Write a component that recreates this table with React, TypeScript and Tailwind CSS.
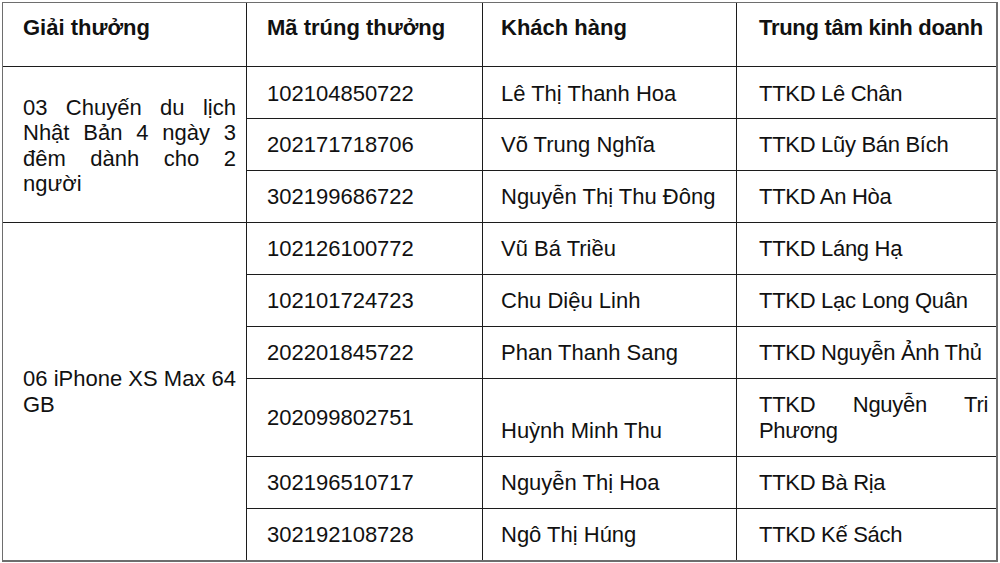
const font = { fontFamily: '"Liberation Sans", Arial, sans-serif' };

type Row = { code: string; name: string[]; center: string[] };

const groups: { prize: string[]; rows: Row[] }[] = [
  {
    prize: ["03 Chuyến du lịch", "Nhật Bản 4 ngày 3", "đêm dành cho 2", "người"],
    rows: [
      { code: "102104850722", name: ["Lê Thị Thanh Hoa"], center: ["TTKD Lê Chân"] },
      { code: "202171718706", name: ["Võ Trung Nghĩa"], center: ["TTKD Lũy Bán Bích"] },
      { code: "302199686722", name: ["Nguyễn Thị Thu Đông"], center: ["TTKD An Hòa"] },
    ],
  },
  {
    prize: ["06 iPhone XS Max 64", "GB"],
    rows: [
      { code: "102126100772", name: ["Vũ Bá Triều"], center: ["TTKD Láng Hạ"] },
      { code: "102101724723", name: ["Chu Diệu Linh"], center: ["TTKD Lạc Long Quân"] },
      { code: "202201845722", name: ["Phan Thanh Sang"], center: ["TTKD Nguyễn Ảnh Thủ"] },
      { code: "202099802751", name: ["\u00a0", "Huỳnh Minh Thu"], center: ["TTKD Nguyễn Tri", "Phương"] },
      { code: "302196510717", name: ["Nguyễn Thị Hoa"], center: ["TTKD Bà Rịa"] },
      { code: "302192108728", name: ["Ngô Thị Húng"], center: ["TTKD Kế Sách"] },
    ],
  },
];

// multi-line cells: every line but the last is justified edge to edge
function Lines({ lines }: { lines: string[] }) {
  return (
    <div className="w-full">
      {lines.map((l, i) => (
        <div
          key={i}
          className={i < lines.length - 1 ? "text-justify [text-align-last:justify]" : "whitespace-nowrap"}
        >
          {l}
        </div>
      ))}
    </div>
  );
}

const cell = "bg-white flex items-center";

export default function App() {
  let rowStart = 2;
  return (
    <div className="w-[1000px] h-[563px] bg-white pt-[2px] pl-[2px]" style={font}>
      <div className="w-[996px] border-l border-t border-r-2 border-b-2 border-[#6e6e6e]">
        <div className="grid grid-cols-[243px_235px_253px_259px] grid-rows-[63px_51px_51px_51px_51px_51px_51px_77px_51px_51px] gap-px bg-[#1c1c1c] text-[22px] leading-[25.3px] text-[#111]">
          {/* header */}
          <div className="bg-white pt-[12px] pl-[20px] font-bold whitespace-nowrap">Giải thưởng</div>
          <div className="bg-white pt-[12px] pl-[20px] font-bold whitespace-nowrap">Mã trúng thưởng</div>
          <div className="bg-white pt-[12px] pl-[18px] font-bold whitespace-nowrap">Khách hàng</div>
          <div className="bg-white pt-[12px] pl-[22px] font-bold whitespace-nowrap tracking-[-0.3px]">Trung tâm kinh doanh</div>

          {groups.map((g, gi) => {
            const start = rowStart;
            rowStart += g.rows.length;
            return [
              <div
                key={`p${gi}`}
                className={`${cell} pl-[20px] pr-[10px] col-start-1 ${gi === 0 ? "pt-[2px]" : ""}`}
                style={{ gridRow: `${start} / span ${g.rows.length}` }}
              >
                <Lines lines={g.prize} />
              </div>,
              ...g.rows.map((r, ri) => {
                const nudge = gi === 0 && ri === 0 ? "pt-[3px]" : "";
                return [
                  <div key={`c${gi}${ri}`} className={`${cell} ${nudge} pl-[20px] col-start-2`} style={{ gridRow: start + ri }}>
                    {r.code}
                  </div>,
                  <div key={`n${gi}${ri}`} className={`${cell} ${nudge} pl-[18px] col-start-3`} style={{ gridRow: start + ri }}>
                    <Lines lines={r.name} />
                  </div>,
                  <div key={`t${gi}${ri}`} className={`${cell} ${nudge} pl-[22px] pr-[8px] col-start-4`} style={{ gridRow: start + ri }}>
                    <div className="w-full tracking-[-0.3px]">
                      <Lines lines={r.center} />
                    </div>
                  </div>,
                ];
              }),
            ];
          })}
        </div>
      </div>
    </div>
  );
}
